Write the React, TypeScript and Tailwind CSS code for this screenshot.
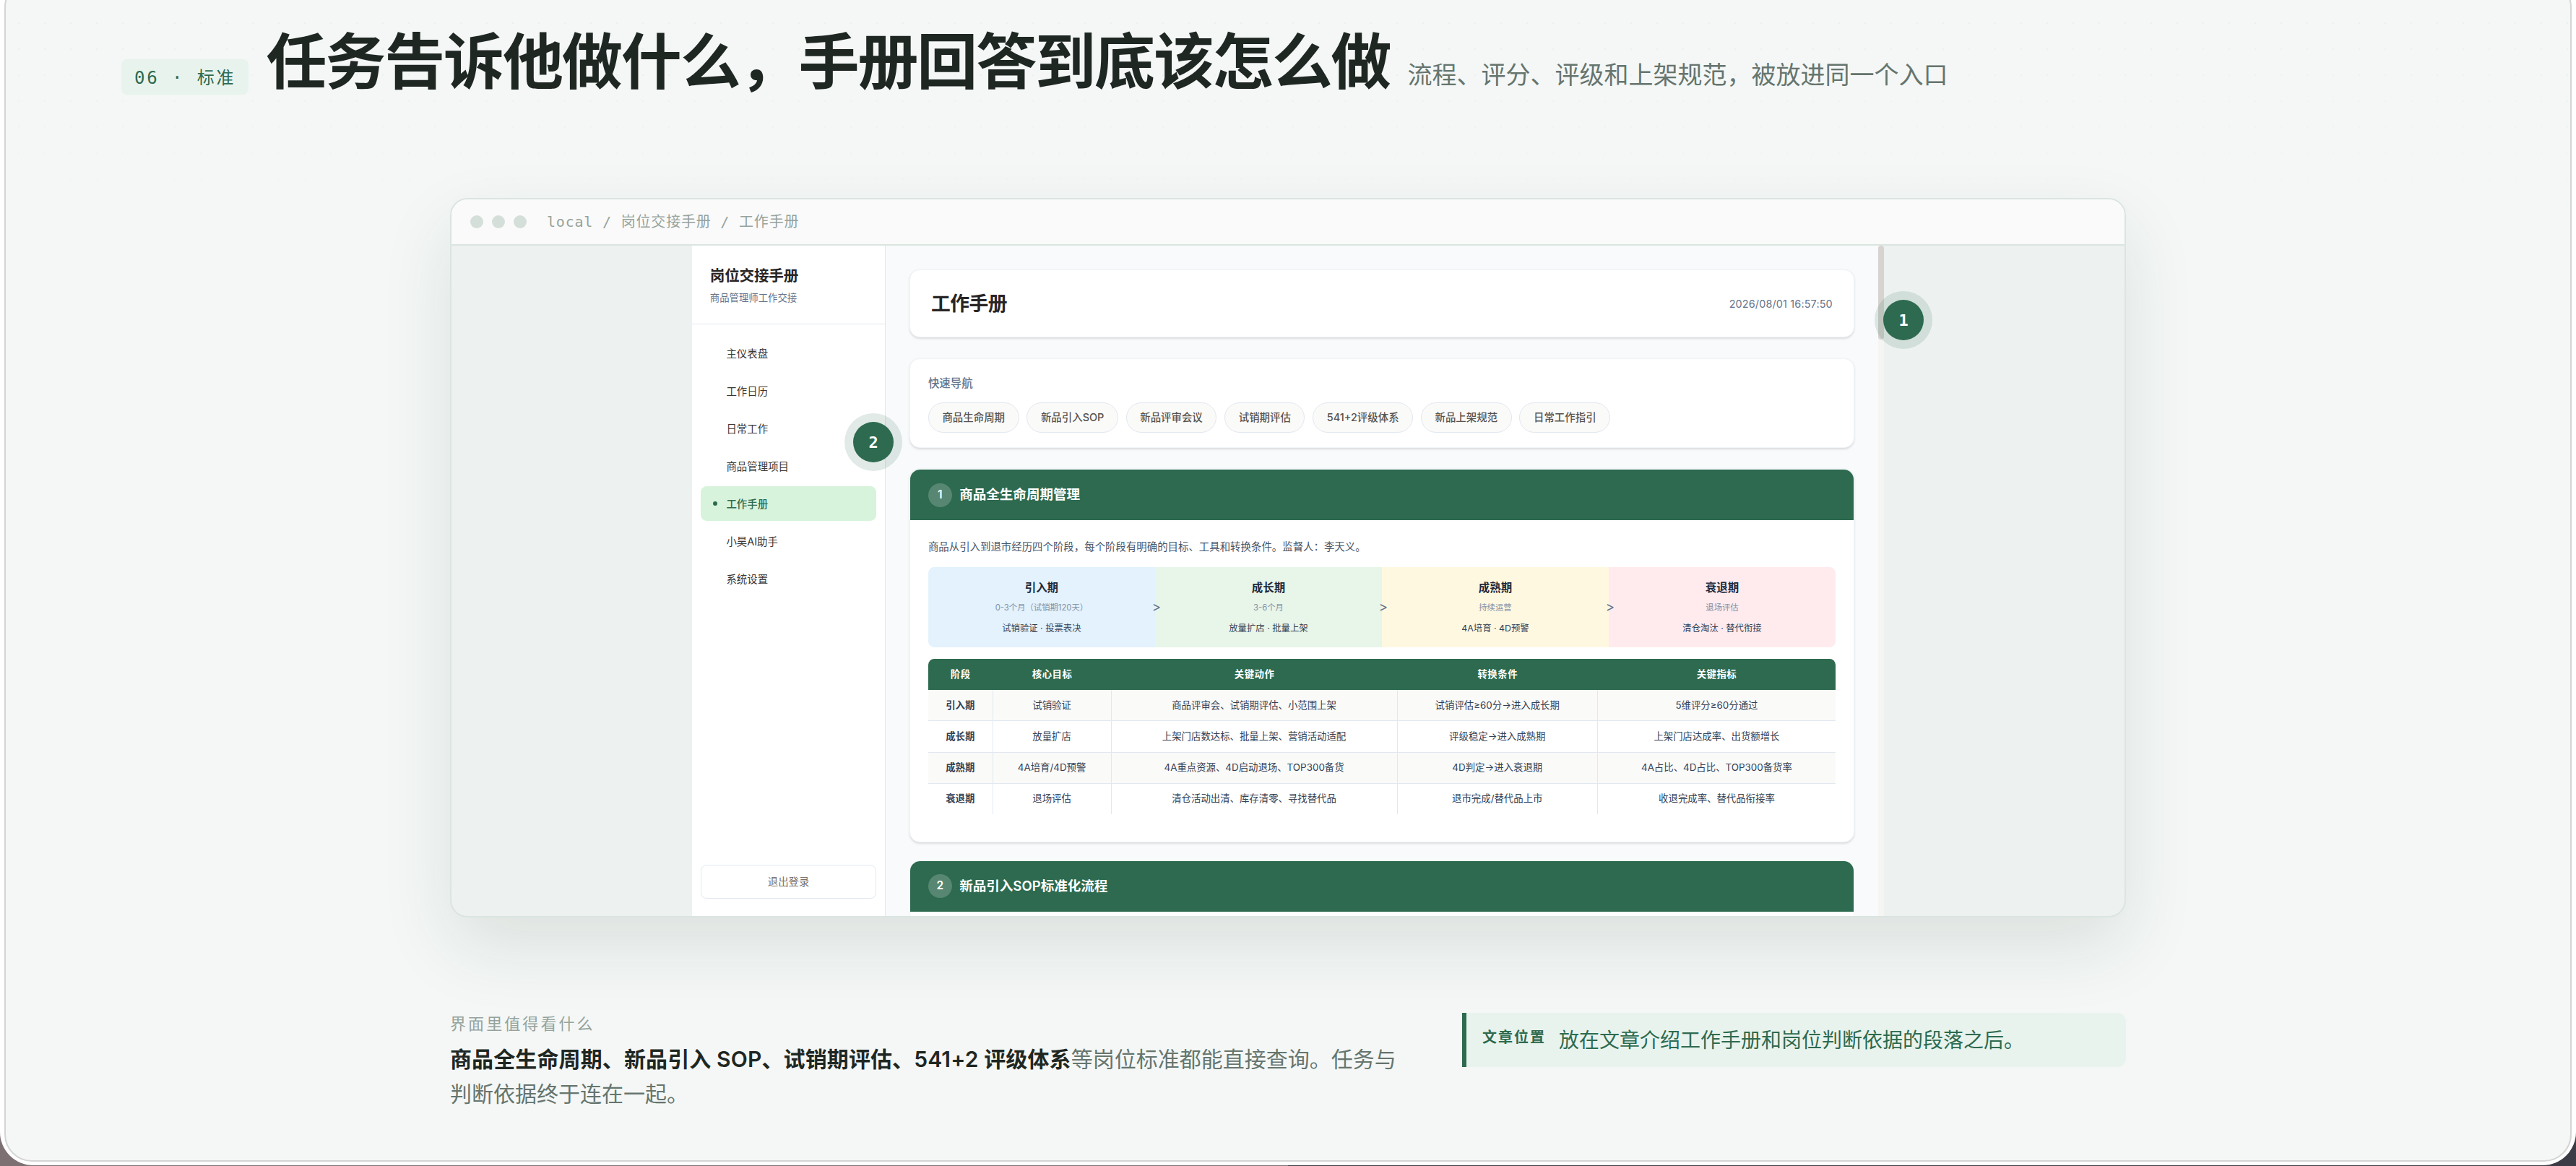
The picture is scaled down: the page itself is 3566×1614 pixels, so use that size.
import React from "react";

type Phase = {name: string, period: string, work: string, color: string};
type Row = {stage: string, goal: string, action: string, condition: string, metric: string};

const NAV_ITEMS = ["主仪表盘", "工作日历", "日常工作", "商品管理项目", "工作手册", "小昊AI助手", "系统设置"];
const QUICK_LINKS = ["商品生命周期", "新品引入SOP", "新品评审会议", "试销期评估", "541+2评级体系", "新品上架规范", "日常工作指引"];

const PHASES: Phase[] = [
	{name: "引入期", period: "0-3个月（试销期120天）", work: "试销验证 · 投票表决", color: "bg-[#e3f2fd]"},
	{name: "成长期", period: "3-6个月", work: "放量扩店 · 批量上架", color: "bg-[#e8f5e9]"},
	{name: "成熟期", period: "持续运营", work: "4A培育 · 4D预警", color: "bg-[#fff8e1]"},
	{name: "衰退期", period: "退场评估", work: "清仓淘汰 · 替代衔接", color: "bg-[#ffebee]"},
];

const ROWS: Row[] = [
	{stage: "引入期", goal: "试销验证", action: "商品评审会、试销期评估、小范围上架", condition: "试销评估≥60分→进入成长期", metric: "5维评分≥60分通过"},
	{stage: "成长期", goal: "放量扩店", action: "上架门店数达标、批量上架、营销活动适配", condition: "评级稳定→进入成熟期", metric: "上架门店达成率、出货额增长"},
	{stage: "成熟期", goal: "4A培育/4D预警", action: "4A重点资源、4D启动退场、TOP300备货", condition: "4D判定→进入衰退期", metric: "4A占比、4D占比、TOP300备货率"},
	{stage: "衰退期", goal: "退场评估", action: "清仓活动出清、库存清零、寻找替代品", condition: "退市完成/替代品上市", metric: "收退完成率、替代品衔接率"},
];

function Header() {
	return (
	<header className="flex h-[300px] items-baseline pt-[64px] pl-[160px]">
		<span className="mr-[24px] flex h-[49px] items-center rounded-lg bg-[#e8f3ed] px-[18px] pt-[3px] font-['DejaVu_Sans_Mono','Noto_Sans_CJK_SC',monospace] text-2xl tracking-[0.12em] whitespace-pre text-[#2d6a4f]">06 · 标准</span>
		<h1 className="text-[84px] leading-[96px] font-bold tracking-[-0.025em] whitespace-nowrap text-[#1f2723]">任务告诉他做什么，手册回答到底该怎么做</h1>
		<p className="ml-[24px] text-[34px] whitespace-nowrap text-[#66756e]">流程、评分、评级和上架规范，被放进同一个入口</p>
	</header>
	);
}

function Sidebar() {
	const items = NAV_ITEMS.map(name => {
		const active = name === "工作手册";
		return (
		<li key={name} className={`mb-1 flex items-center gap-3 rounded-lg px-4 py-3 ${active ? "bg-[#d8f3dc] font-medium text-[#2d6a4f]" : "text-[#3b3734]"}`}>
			<span className={`size-1.5 rounded-full ${active ? "bg-[#2d6a4f]" : ""}`} />
			{name}
		</li>
		);
	});

	return (
	<aside className="flex w-[260px] shrink-0 flex-col border-r border-[#e2e8f0] bg-white text-[14px]">
		<div className="border-b border-[#e2e8f0] p-6">
			<div className="text-[20px] font-bold tracking-[-0.01em] text-[#292524]">岗位交接手册</div>
			<div className="mt-1 text-[13px] text-[#64748b]">商品管理师工作交接</div>
		</div>
		<ul className="grow px-3 py-4">{items}</ul>
		<button className="mx-3 mb-[23px] h-[46px] rounded-lg border border-[#e2e8f0] text-[#78716c]">退出登录</button>
	</aside>
	);
}

function QuickNav() {
	return (
	<div className="mt-7 rounded-[14px] border border-[#f1f5f9] bg-white px-6 pt-[21px] pb-5 shadow-[0_1px_3px_rgba(0,0,0,0.12)]">
		<div className="mb-[13px] text-[15px] font-medium text-[#64748b]">快速导航</div>
		<div className="flex gap-[10.5px]">
			{QUICK_LINKS.map(l => <span key={l} className="rounded-full border border-[#e2e8f0] bg-[#fafaf9] px-[18px] py-2 text-[14px] font-medium text-[#57534e]">{l}</span>)}
		</div>
	</div>
	);
}

function SectionHead(props: {no: number, title: string}) {
	return (
	<div className="flex h-[68px] items-center gap-[10px] bg-[#2d6a4f] px-6 text-white">
		<span className="flex size-8 items-center justify-center rounded-full bg-white/20 text-[15px] font-semibold">{props.no}</span>
		<h3 className="text-[18px] font-semibold">{props.title}</h3>
	</div>
	);
}

function PhaseFlow() {
	return (
	<div className="mt-4 grid grid-cols-4 overflow-hidden rounded-lg text-center">
		{PHASES.map((p, i) => (
		<div key={p.name} className={`relative pt-[17px] pb-4 ${p.color}`}>
			<div className="text-[15px] font-semibold text-[#1e293b]">{p.name}</div>
			<div className="mt-[5px] text-[11px] text-[#8291a7]">{p.period}</div>
			<div className="mt-[9px] text-[12px] text-[#334155]">{p.work}</div>
			{i > 0 && <span className="absolute top-1/2 -left-[4px] -translate-y-1/2 text-[18px] leading-none text-[#64748b]">&gt;</span>}
		</div>
		))}
	</div>
	);
}

function PhaseTable() {
	const cell = "border-r border-[#e2e8f0] py-[10px]";
	return (
	<div className="mt-4 mb-[13px] overflow-hidden rounded-t-lg text-center text-[13px] text-[#334155]">
		<div className="grid grid-cols-[87px_159px_384px_269px_319px] bg-[#2d6a4f] pt-[10px] pb-[11px] font-semibold tracking-[0.5px] text-white">
			<span>阶段</span><span>核心目标</span><span>关键动作</span><span>转换条件</span><span>关键指标</span>
		</div>
		{ROWS.map(r => (
		<div key={r.stage} className="grid grid-cols-[87px_159px_384px_269px_319px] border-b border-[#e2e8f0] odd:bg-white even:bg-[#fafaf9] last:border-b-0">
			<span className={`${cell} font-semibold`}>{r.stage}</span>
			<span className={cell}>{r.goal}</span>
			<span className={cell}>{r.action}</span>
			<span className={cell}>{r.condition}</span>
			<span className="py-[10px]">{r.metric}</span>
		</div>
		))}
	</div>
	);
}

function Manual() {
	return (
	<main className="h-full min-w-0 grow overflow-hidden bg-[#f8fafc] p-8">
		<div className="flex items-center justify-between rounded-[14px] border border-[#f1f5f9] bg-white px-7 py-6 shadow-[0_1px_3px_rgba(0,0,0,0.12)]">
			<h2 className="text-[26px] font-bold tracking-[-0.02em] text-[#292524]">工作手册</h2>
			<span className="text-[14px] tracking-[0.01em] text-[#64748b]">2026/08/01 16:57:50</span>
		</div>
		<QuickNav />
		<section className="mt-7 overflow-hidden rounded-[14px] border border-[#f1f5f9] bg-white shadow-[0_1px_3px_rgba(0,0,0,0.12)]">
			<SectionHead no={1} title="商品全生命周期管理" />
			<div className="p-6">
				<p className="text-[14px] text-[#475569]">商品从引入到退市经历四个阶段，每个阶段有明确的目标、工具和转换条件。监督人：李天义。</p>
				<PhaseFlow />
				<PhaseTable />
			</div>
		</section>
		<section className="mt-6 h-[200px] overflow-hidden rounded-[14px] border border-[#f1f5f9] bg-white">
			<SectionHead no={2} title="新品引入SOP标准化流程" />
		</section>
	</main>
	);
}

function Marker(props: {no: number, place: string}) {
	return (
	<span className={`absolute flex size-[56px] items-center justify-center rounded-full bg-[#2d6a4f] font-['DejaVu_Sans_Mono',monospace] text-[22px] font-bold text-white shadow-[0_0_0_12px_rgba(45,106,79,0.14)] ${props.place}`}>{props.no}</span>
	);
}

function BrowserWindow() {
	return (
	<div className="relative mx-auto h-[996px] w-[2320px] overflow-hidden rounded-[24px] border-2 border-[#dbe5e0] bg-[#edf1f0] shadow-[0_40px_100px_rgba(25,55,35,0.11)]">
		<div className="flex h-[64px] items-center gap-3 border-b-2 border-[#dbe5e0] bg-[#fafafa] pl-[26px]">
			<span className="size-[18px] rounded-full bg-[#d5dfda]" />
			<span className="size-[18px] rounded-full bg-[#d5dfda]" />
			<span className="size-[18px] rounded-full bg-[#d5dfda]" />
			<span className="ml-[16px] font-['DejaVu_Sans_Mono','Noto_Sans_CJK_SC',monospace] text-[20px] tracking-[0.04em] text-[#95a39c]">local / 岗位交接手册 / 工作手册</span>
		</div>
		{/* app captured at 1600x900, enlarged to fill the window height */}
		<div className="mx-auto flex h-[900px] w-[1600px] leading-[1.6] [zoom:1.03125]">
			<Sidebar />
			<Manual />
			<div className="w-2 shrink-0 bg-[#f5f5f4]">
				<div className="h-[126px] rounded-full bg-[#d6d3d1]" />
			</div>
		</div>
		<Marker no={1} place="left-[1982px] top-[139px]" />
		<Marker no={2} place="left-[556px] top-[308px]" />
	</div>
	);
}

function Notes() {
	return (
	<footer className="mx-auto mt-[132px] flex w-[2320px] items-start justify-between">
		<div className="w-[1321px]">
			<div className="text-[22px] leading-[30px] tracking-[0.14em] text-[#95a39c]">界面里值得看什么</div>
			<p className="mt-[10px] text-[30px] leading-[48px] text-[#66756e]">
				<b className="font-semibold tracking-[0.12px] text-[#1f2723]">商品全生命周期、新品引入 SOP、试销期评估、541+2 评级体系</b>等岗位标准都能直接查询。任务与判断依据终于连在一起。
			</p>
		</div>
		<div className="flex h-[75px] w-[919px] items-start gap-[18px] rounded-r-xl border-l-[6px] border-[#2d6a4f] bg-[#e8f3ed] pt-[16px] pl-[22px] text-[28px] leading-[45px] text-[#2d6a4f]">
			<b className="text-[20px] leading-[36px] font-semibold tracking-[0.1em]">文章位置</b>
			<span>放在文章介绍工作手册和岗位判断依据的段落之后。</span>
		</div>
	</footer>
	);
}

export default function App() {
	return (
	<div className="h-[1614px] w-[3566px] overflow-hidden bg-[linear-gradient(90deg,#7d7073_50%,#3c3c46_50%)] font-['Inter','Noto_Sans_CJK_SC',sans-serif]">
		<div className="-mt-[28px] h-[1641px] overflow-hidden rounded-b-[46px] bg-white px-[6px]">
			<div className="h-[1636px] rounded-[38px] border-2 border-[#d4d4d4] bg-[#f4f7f6] bg-[linear-gradient(to_bottom,transparent,#f4f7f6_400px),radial-gradient(circle,rgba(45,106,79,0.06)_1px,transparent_1.5px)] bg-[size:auto,36px_36px] bg-[position:0_0,0_4px]">
				<Header />
				<BrowserWindow />
				<Notes />
			</div>
		</div>
	</div>
	);
}
